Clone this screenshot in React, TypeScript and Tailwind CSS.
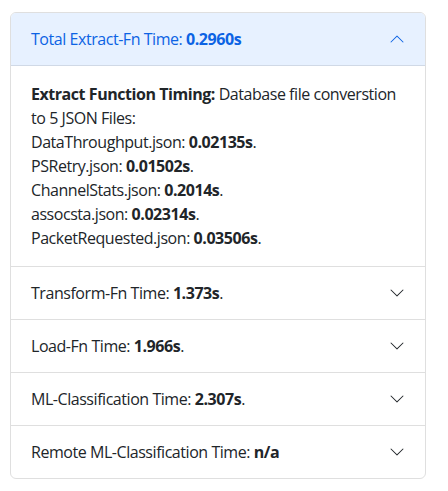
import React from "react";

const Chevron = ({ up }: { up?: boolean }) => (
  <svg
    width="16"
    height="16"
    viewBox="0 0 16 16"
    className={up ? "rotate-180 shrink-0" : "shrink-0"}
    fill={up ? "#0c63e4" : "#212529"}
  >
    <path
      fillRule="evenodd"
      d="M1.646 4.646a.5.5 0 0 1 .708 0L8 10.293l5.646-5.647a.5.5 0 0 1 .708.708l-6 6a.5.5 0 0 1-.708 0l-6-6a.5.5 0 0 1 0-.708z"
    />
  </svg>
);

const Row = ({ label, value }: { label: string; value: string }) => (
  <div className="border-t border-[#dfdfdf]">
    <div className="flex items-center justify-between px-5 py-4 leading-[20px]">
      <span className="whitespace-nowrap">
        {label} <b className="font-bold">{value}</b>
        {value !== "n/a" ? "." : ""}
      </span>
      <Chevron />
    </div>
  </div>
);

export default function App() {
  return (
    <div
      className="bg-white w-[448px] h-[491px] pt-3 px-[10px] text-[16px] text-[#212529] tracking-[-0.45px]"
      style={{ fontFamily: '"Segoe UI", "Open Sans", sans-serif' }}
    >
      <div className="w-[416px] border border-[#dfdfdf] rounded-[6px] overflow-hidden">
        <div className="flex items-center justify-between px-5 py-4 leading-[20px] bg-[#e7f1ff] text-[#0c63e4] border-b border-[#d0d9e6]">
          <span className="whitespace-nowrap">
            Total Extract-Fn Time: <b className="font-bold">0.2960s</b>
          </span>
          <Chevron up />
        </div>
        <div className="px-5 py-4 leading-6 whitespace-nowrap">
          <b className="font-bold">Extract Function Timing:</b> Database file converstion
          <br />
          to 5 JSON Files:
          <br />
          DataThroughput.json: <b className="font-bold">0.02135s</b>.
          <br />
          PSRetry.json: <b className="font-bold">0.01502s</b>.
          <br />
          ChannelStats.json: <b className="font-bold">0.2014s</b>.
          <br />
          assocsta.json: <b className="font-bold">0.02314s</b>.
          <br />
          PacketRequested.json: <b className="font-bold">0.03506s</b>.
        </div>
        <Row label="Transform-Fn Time:" value="1.373s" />
        <Row label="Load-Fn Time:" value="1.966s" />
        <Row label="ML-Classification Time:" value="2.307s" />
        <Row label="Remote ML-Classification Time:" value="n/a" />
      </div>
    </div>
  );
}
